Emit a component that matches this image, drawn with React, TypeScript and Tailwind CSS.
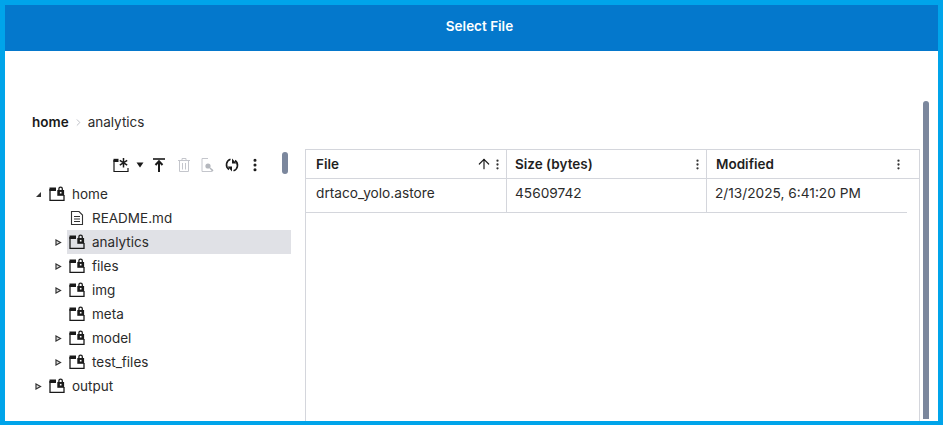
import { ArrowUp, ChevronRight, EllipsisVertical } from "lucide-react";

const font = "font-['Inter','Noto_Sans',sans-serif]";

function FolderIcon() {
  return (
    <svg width="16" height="16" viewBox="0 0 16 16" className="shrink-0">
      <path d="M1 3V14.3H15V9" fill="none" stroke="#1a1a1a" strokeWidth="1.3" />
      <path d="M0.5 1.5H7V5H0.5Z" fill="#1a1a1a" />
      <path d="M9.9 5V2.8a1.7 1.7 0 0 1 3.4 0V5" fill="none" stroke="#1a1a1a" strokeWidth="1.3" />
      <rect x="8.3" y="4" width="6.8" height="5.8" fill="#1a1a1a" />
      <rect x="10.9" y="5.9" width="1.6" height="1.6" fill="#fff" />
    </svg>
  );
}

function FileIcon() {
  return (
    <svg width="16" height="16" viewBox="0 0 16 16" className="shrink-0">
      <path d="M2.5 1.5H10L13.5 5V14.5H2.5Z" fill="none" stroke="#333" strokeWidth="1.1" />
      <path d="M5 6.5H11M5 9H11M5 11.5H11" stroke="#333" strokeWidth="1" />
    </svg>
  );
}

function Twisty({ open }: { open?: boolean }) {
  if (open) {
    return (
      <svg width="7" height="7" viewBox="0 0 7 7" className="ml-[3px] shrink-0">
        <path d="M6 1V6H1Z" fill="#333" />
      </svg>
    );
  }
  return (
    <svg width="7" height="7" viewBox="0 0 7 7" className="ml-[3px] shrink-0">
      <path d="M1 1L5.5 3.5L1 6Z" fill="#e4e4e4" stroke="#333" strokeWidth="1.2" />
    </svg>
  );
}

function TreeRow({ label, depth, twisty, open, file, selected }: {
  label: string;
  depth: number;
  twisty?: boolean;
  open?: boolean;
  file?: boolean;
  selected?: boolean;
}) {
  return (
    <div className={`flex h-6 items-center ${depth === 1 ? "pl-[20px]" : ""}`}>
      <div className="flex w-[15px] shrink-0 items-center">{twisty && <Twisty open={open} />}</div>
      <div className={`flex h-6 flex-1 items-center gap-[7px] pl-[2px] ${selected ? "bg-[#e0e1e6]" : ""}`}>
        {file ? <FileIcon /> : <FolderIcon />}
        <span className="text-[13.5px] text-[#2b2b2b]">{label}</span>
      </div>
    </div>
  );
}

function Toolbar() {
  return (
    <div className="flex h-[24px] items-center justify-end pr-[28px]">
      <svg width="17" height="16" viewBox="0 0 17 16" className="mr-[6px]">
        <path d="M1 3V14.5H15V11" fill="none" stroke="#1a1a1a" strokeWidth="1.2" />
        <path d="M0.5 1.8H5.5V5H0.5Z" fill="#1a1a1a" />
        <path d="M10.5 1V10.5M6.8 3.4L14.2 8.1M14.2 3.4L6.8 8.1" stroke="#1a1a1a" strokeWidth="1.5" />
      </svg>
      <svg width="8" height="6" viewBox="0 0 8 6" className="mr-[8px]">
        <path d="M0.5 0.5H7.5L4 5.5Z" fill="#1a1a1a" />
      </svg>
      <svg width="14" height="16" viewBox="0 0 14 16" className="mr-[11px]">
        <path d="M1 2H13" stroke="#1a1a1a" strokeWidth="1.6" />
        <path d="M7 15V5M3.5 8L7 4.2L10.5 8" fill="none" stroke="#1a1a1a" strokeWidth="2" />
      </svg>
      <svg width="14" height="16" viewBox="0 0 14 16" className="mr-[9px]">
        <path d="M1 3.5H13M5 3.5V1.5H9V3.5M2.5 3.5V14.5H11.5V3.5M5.5 6V12.5M8.5 6V12.5" fill="none" stroke="#c4c6cc" strokeWidth="1" />
      </svg>
      <svg width="14" height="16" viewBox="0 0 14 16" className="mr-[10px]">
        <path d="M8 1.5H2V14.5H12V12" fill="none" stroke="#c4c6cc" strokeWidth="1" />
        <circle cx="8" cy="9" r="2.6" fill="#b4b7bd" />
        <path d="M10 11L13 14" stroke="#b4b7bd" strokeWidth="1.4" />
      </svg>
      <svg width="16" height="16" viewBox="0 0 16 16" className="mr-[7px]">
        <path d="M6.5 2.2A5.8 5.8 0 0 0 5 12.5" fill="none" stroke="#1a1a1a" strokeWidth="1.6" />
        <path d="M9.5 13.8A5.8 5.8 0 0 0 11 3.5" fill="none" stroke="#1a1a1a" strokeWidth="1.6" />
        <path d="M3.5 9.5H8V14.5ZM12.5 6.5H8V1.5Z" fill="#1a1a1a" />
      </svg>
      <EllipsisVertical size={16} strokeWidth={2.6} className="text-[#1a1a1a]" />
    </div>
  );
}

function HeaderCell({ label, width, sorted, last, pad }: { label: string; width: string; sorted?: boolean; last?: boolean; pad: string }) {
  return (
    <div className={`flex h-full items-center ${pad} ${last ? "pr-[13px]" : "border-r border-[#d4d6dc] pr-[1px]"} ${width}`}>
      <span className="flex-1 text-[13.5px] font-semibold text-[#1f1f1f]">{label}</span>
      {sorted && <ArrowUp size={16} strokeWidth={1.8} className="mr-[-1px] text-[#1f1f1f]" />}
      <EllipsisVertical size={13} strokeWidth={2.2} className="mr-[1px] text-[#333]" />
    </div>
  );
}

export default function App() {
  return (
    <div className={`flex h-[425px] w-[943px] flex-col overflow-hidden border-[5px] border-b-[4px] border-[#00a4ea] bg-white ${font}`}>
      <div className="flex h-[46px] shrink-0 items-center justify-center bg-[#0478cc] pb-[4px] pl-[16px] text-[13.5px] font-semibold text-white">
        Select File
      </div>
      <div className="flex min-h-0 flex-1">
        <div className="flex w-[915px] shrink-0 flex-col pl-[27px] pt-[61px]">
          <div className="flex h-5 shrink-0 items-center text-[13.5px] text-[#2b2b2b]">
            <span className="font-semibold text-[#1a1a1a]">home</span>
            <ChevronRight size={11} className="mx-[4px] text-[#b9bbc3]" />
            <span>analytics</span>
          </div>
          <div className="flex min-h-0 flex-1 pt-[17px]">
            <div className="relative w-[273px] shrink-0 pr-[14px]">
              <div className="pt-[4px]">
                <Toolbar />
              </div>
              <div className="absolute right-[17px] top-[3px] h-[22px] w-[6px] rounded-[3px] bg-[#7b879d]" />
              <div className="pt-[5px]">
                <TreeRow label="home" depth={0} twisty open />
                <TreeRow label="README.md" depth={1} file />
                <TreeRow label="analytics" depth={1} twisty selected />
                <TreeRow label="files" depth={1} twisty />
                <TreeRow label="img" depth={1} twisty />
                <TreeRow label="meta" depth={1} />
                <TreeRow label="model" depth={1} twisty />
                <TreeRow label="test_files" depth={1} twisty />
                <TreeRow label="output" depth={0} twisty />
              </div>
            </div>
            <div className="flex h-full w-[615px] shrink-0 flex-col border-x border-t border-[#d4d6dc]">
              <div className="flex h-[29px] shrink-0 border-b border-[#d4d6dc]">
                <HeaderCell label="File" width="w-[201px]" pad="pl-[10px]" sorted />
                <HeaderCell label="Size (bytes)" width="w-[200px]" pad="pl-[8px]" />
                <HeaderCell label="Modified" width="flex-1" pad="pl-[9px]" last />
              </div>
              <div className="mr-[12px] flex h-[34px] shrink-0 border-b border-[#d4d6dc] text-[13.7px] text-[#2b2b2b]">
                <div className="flex w-[201px] items-center border-r border-[#d4d6dc] pb-[4px] pl-[10px]">drtaco_yolo.astore</div>
                <div className="flex w-[200px] items-center border-r border-[#d4d6dc] pb-[4px] pl-[8px]">45609742</div>
                <div className="flex flex-1 items-center pb-[4px] pl-[8px]">2/13/2025, 6:41:20 PM</div>
              </div>
            </div>
          </div>
        </div>
        <div className="mb-[2px] ml-[3px] mr-[9px] mt-[50px] w-[6px] shrink-0 rounded-t-[3px] bg-[#7b879d]" />
      </div>
    </div>
  );
}
